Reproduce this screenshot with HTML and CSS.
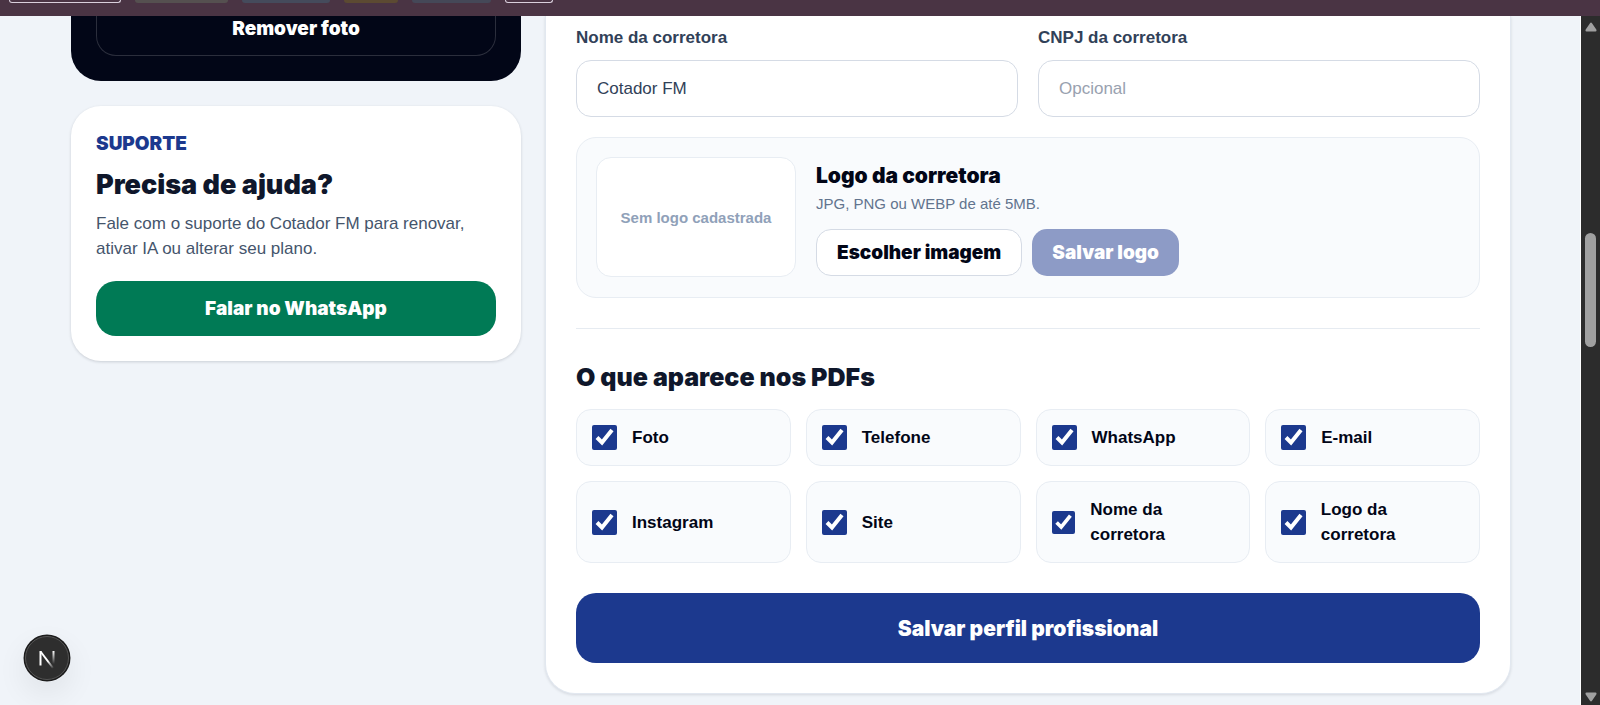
FILE: index.html
```html
<!DOCTYPE html>
<html lang="pt-BR">
<head>
<meta charset="utf-8">
<meta name="viewport" content="width=device-width, initial-scale=1">
<title>Perfil profissional</title>
<link rel="stylesheet" href="styles.css">
</head>
<body>
<div class="tabstrip" aria-hidden="true">
  <span class="tab tab-a"></span><span class="tab tab-b"></span><span class="tab tab-c"></span><span class="tab tab-d"></span><span class="tab tab-e"></span><span class="tab tab-f"></span>
</div>
<div class="view">
  <main class="page">
    <div class="layout">
      <aside class="side">
        <section class="photo-card">
          <button class="remove" type="button">Remover foto</button>
        </section>
        <section class="support">
          <p class="eyebrow">SUPORTE</p>
          <h2 class="support-title">Precisa de ajuda?</h2>
          <p class="support-text">Fale com o suporte do Cotador FM para renovar, ativar IA ou alterar seu plano.</p>
          <a class="whatsapp" href="#">Falar no WhatsApp</a>
        </section>
      </aside>
      <form class="profile">
        <div class="fields">
          <div class="field">
            <label for="nome">Nome da corretora</label>
            <input id="nome" type="text" value="Cotador FM">
          </div>
          <div class="field">
            <label for="cnpj">CNPJ da corretora</label>
            <input id="cnpj" type="text" placeholder="Opcional">
          </div>
        </div>
        <div class="logo-panel">
          <div class="logo-box">Sem logo cadastrada</div>
          <div class="logo-info">
            <h3>Logo da corretora</h3>
            <p>JPG, PNG ou WEBP de até 5MB.</p>
            <div class="logo-actions">
              <button class="choose" type="button">Escolher imagem</button>
              <button class="save-logo" type="button" disabled>Salvar logo</button>
            </div>
          </div>
        </div>
        <section class="pdf">
          <h2>O que aparece nos PDFs</h2>
          <div class="options">
            <label class="option"><input type="checkbox" checked><span>Foto</span></label>
            <label class="option"><input type="checkbox" checked><span>Telefone</span></label>
            <label class="option"><input type="checkbox" checked><span>WhatsApp</span></label>
            <label class="option"><input type="checkbox" checked><span>E-mail</span></label>
            <label class="option"><input type="checkbox" checked><span>Instagram</span></label>
            <label class="option"><input type="checkbox" checked><span>Site</span></label>
            <label class="option"><input type="checkbox" checked><span>Nome da corretora</span></label>
            <label class="option"><input type="checkbox" checked><span>Logo da corretora</span></label>
          </div>
        </section>
        <button class="submit" type="button">Salvar perfil profissional</button>
      </form>
    </div>
  </main>
  <div class="scrollbar" aria-hidden="true">
    <svg width="12" height="10" viewBox="0 0 12 10"><path d="M5 1.2Q6-.4 7 1.2L11.3 7.6Q12 9.5 10.5 9.5H1.5Q0 9.5.7 7.6Z" fill="#a0a0a0"/></svg>
    <span class="thumb"></span>
    <svg width="12" height="10" viewBox="0 0 12 10"><path d="M5 8.8Q6 10.4 7 8.8L11.3 2.4Q12 .5 10.5.5H1.5Q0 .5.7 2.4Z" fill="#a0a0a0"/></svg>
  </div>
</div>
<button class="dev" type="button" aria-label="Ferramentas">
  <svg width="48" height="48" viewBox="0 0 48 48">
    <defs>
      <linearGradient id="diag" x1="25" y1="27" x2="31" y2="34" gradientUnits="userSpaceOnUse"><stop stop-color="#fff"/><stop offset="1" stop-color="#fff" stop-opacity="0"/></linearGradient>
      <linearGradient id="stem" x1="0" y1="17" x2="0" y2="30" gradientUnits="userSpaceOnUse"><stop stop-color="#fff"/><stop offset="1" stop-color="#fff" stop-opacity="0"/></linearGradient>
    </defs>
    <circle cx="24" cy="24" r="23.5" fill="#1c1c1c"/>
    <circle cx="24" cy="24" r="21.5" fill="#2e2e2e" stroke="#555"/>
    <path d="M17.5 17.500L30 34" fill="none" stroke="url(#diag)" stroke-width="2"/>
    <path d="M17.500 31.500V17" stroke="#fff" stroke-width="2"/>
    <path d="M29.500 17H31.500V30H29.500Z" fill="url(#stem)"/>
  </svg>
</button>
</body>
</html>
```
FILE: styles.css
```css
* { box-sizing: border-box; }

body {
  margin: 0;
  height: 100vh;
  display: flex;
  flex-direction: column;
  overflow: hidden;
  background: #f0f4f9;
  color: #020617;
  font: 17px/25px "Liberation Sans", Arial, sans-serif;
}

h2, h3, p { margin: 0; }
button, input { font: inherit; }

.tabstrip {
  flex: none;
  height: 16px;
  padding-left: 9px;
  display: flex;
  gap: 14px;
  background: #4a3444;
}
.tab { height: 3px; border-radius: 0 0 4px 4px; }
.tab-a, .tab-f { border: solid #d9cfdc; border-width: 0 1px 1px; }
.tab-a { width: 112px; }
.tab-b { width: 93px; background: #555050; }
.tab-c { width: 88px; background: #454b5c; }
.tab-d { width: 54px; background: #5c4a32; }
.tab-e { width: 79px; background: #454858; }
.tab-f { width: 48px; }

.view { flex: 1; min-height: 0; display: flex; }
.page { flex: 1; min-width: 0; overflow: hidden; box-shadow: inset -1px 0 #fff; }
.layout {
  max-width: 1441px;
  margin: 0 auto;
  padding-left: 1px;
  display: grid;
  grid-template-columns: 450px 1fr;
  gap: 24px;
  align-items: start;
}

.side { display: grid; gap: 25px; }
.photo-card {
  padding: 0 25px 25px;
  border-radius: 0 0 30px 30px;
  background: #020617;
}
.remove {
  display: block;
  width: 100%;
  height: 40px;
  padding: 0 0 17px;
  border: 1px solid #2b2e3c;
  border-top: 0;
  border-radius: 0 0 20px 20px;
  background: none;
  color: #fff;
}
.remove, .eyebrow, .support-title, .whatsapp, .logo-info h3, .choose, .save-logo, .pdf h2, .submit {
  font-family: "Arial Black", Inter, "Liberation Sans", sans-serif;
  font-size: 19px;
  font-weight: 900;
  font-optical-sizing: none;
}
.support {
  padding: 25px;
  border-radius: 30px;
  background: #fff;
  box-shadow: 0 1px 3px #0f172a2b;
}
.eyebrow { color: #1c398e; }
.support-title { margin-top: 11px; font-size: 27px; line-height: 35px; color: #0f172b; }
.support-text { margin-top: 9px; color: #45556c; }
.whatsapp {
  display: block;
  margin-top: 20px;
  padding: 15px;
  border-radius: 20px;
  background: #007a55;
  color: #fff;
  text-align: center;
  text-decoration: none;
}

.profile {
  padding: 9px 30px 30px;
  border: solid #e2e8f0;
  border-width: 0 1px 1px;
  border-radius: 0 0 30px 30px;
  background: #fff;
  box-shadow: 0 1px 3px #0f172a20;
}
.fields { display: grid; grid-template-columns: 1fr 1fr; gap: 20px; }
.field label { display: block; margin-bottom: 10px; font-weight: 700; color: #314158; }
.field input {
  display: block;
  width: 100%;
  height: 57px;
  padding: 0 20px;
  border: 1px solid #d5dbe5;
  border-radius: 15px;
  background: #fff;
  color: #314158;
}
.field input::placeholder { color: #99a1af; opacity: 1; }

.logo-panel {
  display: flex;
  align-items: center;
  gap: 20px;
  margin-top: 20px;
  padding: 19px 19px 20px;
  border: 1px solid #e8edf3;
  border-radius: 20px;
  background: #f9fbfd;
}
.logo-box {
  width: 200px;
  height: 120px;
  display: grid;
  place-items: center;
  border: 1px solid #e8edf3;
  border-radius: 15px;
  background: #fff;
  color: #90a1b9;
  font-size: 15px;
  font-weight: 700;
}
.logo-info { padding-top: 5px; }
.logo-info h3 { font-size: 21px; color: #020617; }
.logo-info p { margin-top: 6px; font-size: 15px; line-height: 20px; color: #62748e; }
.logo-actions { display: flex; gap: 10px; margin-top: 15px; }
.choose, .save-logo { height: 47px; padding: 0 20px; border-radius: 15px; }
.choose { border: 1px solid #d5dbe5; background: #fff; color: #020617; }
.save-logo { border: 0; background: #8d9bc6; color: #fff; }

.pdf { margin-top: 30px; padding-top: 31px; border-top: 1px solid #e6ebf1; }
.pdf h2 { font-size: 25px; line-height: 35px; color: #0f172b; }
.options {
  display: grid;
  grid-template-columns: repeat(4, 1fr);
  gap: 15px;
  margin-top: 14px;
}
.option {
  display: flex;
  align-items: center;
  gap: 15px;
  padding: 15px;
  border: 1px solid #e8edf3;
  border-radius: 15px;
  background: #f9fbfd;
  font-weight: 700;
}
.option input { width: 25px; height: 25px; margin: 0; accent-color: #1c398e; }
.submit {
  display: block;
  width: 100%;
  height: 70px;
  margin-top: 30px;
  border: 0;
  border-radius: 20px;
  background: #1c398e;
  color: #fff;
  font-size: 21px;
}

.scrollbar {
  width: 19px;
  padding: 6px 0 3px;
  display: flex;
  flex-direction: column;
  align-items: center;
  justify-content: space-between;
  background: #2c2c2c;
}
.thumb { width: 11px; height: 114px; margin-bottom: 144px; border-radius: 6px; background: #a0a0a0; }

.dev {
  position: fixed;
  left: 23px;
  bottom: 23px;
  width: 48px;
  height: 48px;
  padding: 0;
  border: 0;
  border-radius: 50%;
  background: none;
  box-shadow: 0 12px 30px #00000012;
}
.dev svg { display: block; }
```
